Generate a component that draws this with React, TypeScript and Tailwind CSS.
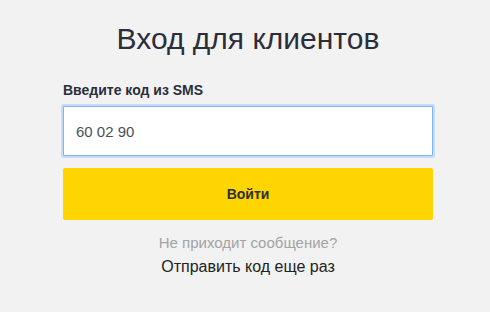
export default function App() {
  return (
    <div className="min-h-[312px] w-[490px] bg-[#f2f2f2] font-['Liberation_Sans',Arial,sans-serif]">
      <div className="ml-[63px] flex w-[370px] flex-col pt-[22px]">
        {/* заголовок */}
        <h1 className="text-center text-[30px] leading-[34px] text-[#2b2e3a]">Вход для клиентов</h1>

        <label className="mt-[26px] text-[14px] font-bold leading-[16px] text-[#2b2e3a]">
          Введите код из SMS
        </label>
        <input
          type="text"
          defaultValue="60 02 90"
          className="mt-[8px] h-[50px] w-full rounded-[1px] border border-[#80b3ef] bg-white px-[12px] text-[15px] text-[#4a4f5c] shadow-[0_0_0_2px_#c4dcf8] outline-none"
        />

        <button className="mt-[12px] h-[52px] w-full rounded-[2px] bg-[#ffd500] text-[14px] font-bold text-[#2b2e3a]">
          Войти
        </button>

        <p className="mt-[14px] text-center text-[15px] leading-[18px] text-[#a3a3a3]">Не приходит сообщение?</p>
        <a href="#" className="mt-[6px] text-center text-[16px] leading-[18px] text-[#222]">
          Отправить код еще раз
        </a>
      </div>
    </div>
  )
}
